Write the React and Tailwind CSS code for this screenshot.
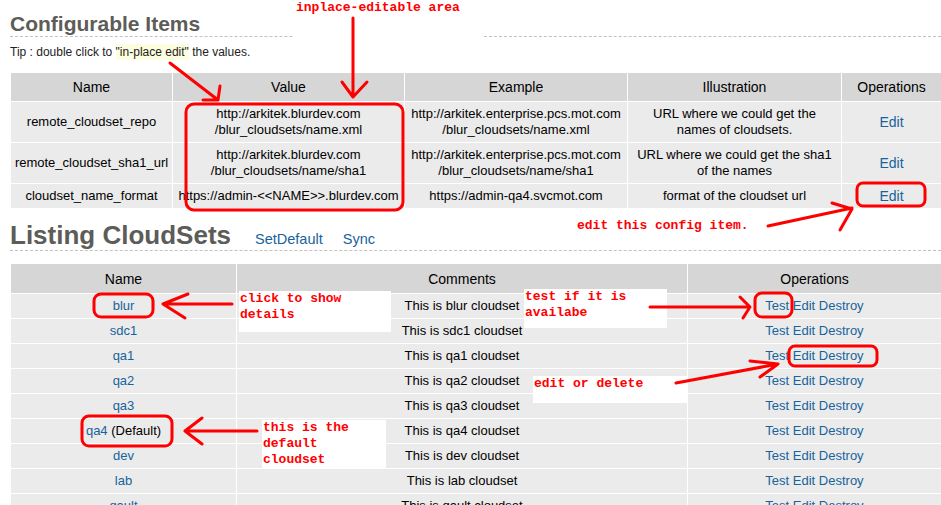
import React from "react";

const configRows = [
  {
    name: "remote_cloudset_repo",
    value: ["http://arkitek.blurdev.com", "/blur_cloudsets/name.xml"],
    example: ["http://arkitek.enterprise.pcs.mot.com", "/blur_cloudsets/name.xml"],
    illustration: ["URL where we could get the", "names of cloudsets."],
  },
  {
    name: "remote_cloudset_sha1_url",
    value: ["http://arkitek.blurdev.com", "/blur_cloudsets/name/sha1"],
    example: ["http://arkitek.enterprise.pcs.mot.com", "/blur_cloudsets/name/sha1"],
    illustration: ["URL where we could get the sha1", "of the names"],
  },
  {
    name: "cloudset_name_format",
    value: ["https://admin-<<NAME>>.blurdev.com"],
    example: ["https://admin-qa4.svcmot.com"],
    illustration: ["format of the cloudset url"],
  },
];

const cloudsets = ["blur", "sdc1", "qa1", "qa2", "qa3", "qa4", "dev", "lab", "qault"];

const Lines = ({ lines }) =>
  lines.map((l, i) => (
    <React.Fragment key={i}>
      {i > 0 && <br />}
      {l}
    </React.Fragment>
  ));

// red scribbles drawn on top of the screenshot
const Annotations = () => (
  <>
    <div className="absolute left-[293px] top-0 w-[191px] h-[40px] bg-white pl-[3px] note">inplace-editable area</div>
    <div className="absolute left-[577px] top-[218px] note">edit this config item.</div>
    <div className="absolute left-[239px] top-[291px] w-[152px] h-[41px] bg-white pl-px note">
      click to show
      <br />
      details
    </div>
    <div className="absolute left-[524px] top-[289px] w-[143px] h-[39px] bg-white pl-px note">
      test if it is
      <br />
      availabe
    </div>
    <div className="absolute left-[533px] top-[376px] w-[155px] h-[27px] bg-white pl-px note">edit or delete</div>
    <div className="absolute left-[262px] top-[420px] w-[124px] h-[48px] bg-white pl-px note">
      this is the
      <br />
      default
      <br />
      cloudset
    </div>

    <svg className="absolute left-0 top-0 pointer-events-none" width="941" height="505" fill="none" stroke="#ff0000" strokeWidth="3" strokeLinecap="round" strokeLinejoin="round">
      <path d="M353 18 L353 96 M342 82 L353 97 L367 82" />
      <path d="M170 63 L218 100 M220 86 L218 100 L203 100" />
      <path d="M768 226 L852 208 M832 203 L852 209 L840 230" />
      <path d="M232 304 L163 304 M188 294 L163 304 L185 318" />
      <path d="M650 307 L750 307 M740 297 L750 307 L743 318" />
      <path d="M676 383 L778 364 M750 361 L778 364 M760 377 L778 364" />
      <path d="M257 431 L185 431 M202 418 L185 431 L202 444" />
      <rect x="186" y="104" width="217" height="106" rx="8" />
      <rect x="857" y="183" width="68" height="23" rx="6" />
      <rect x="94" y="294" width="59" height="23" rx="7" />
      <rect x="755" y="293" width="37" height="24" rx="7" />
      <rect x="789" y="346" width="88" height="20" rx="6" />
      <rect x="82" y="416" width="90" height="30" rx="7" />
    </svg>
  </>
);

export default function App() {
  return (
    <div className="relative w-[941px] h-[505px] overflow-hidden bg-white font-['Liberation_Sans',Arial,sans-serif] text-black">
      <style>{`.note{font-family:"Liberation Mono","DejaVu Sans Mono",monospace;font-weight:700;font-size:13px;line-height:16px;color:#ff0000;white-space:nowrap}`}</style>

      <div className="pl-[10px]">
        <h1 className="mt-[12px] text-[21px] leading-[24px] font-bold text-[#5c5c58] border-b border-dashed border-[#c2c2c2]">
          Configurable Items
        </h1>
        <p className="mt-[8px] text-[12px] leading-[15px] text-[#222]">
          Tip : double click to <span className="bg-[#fdfde0] py-px">"in-place edit"</span> the values.
        </p>

        <table className="mt-[12px] w-[931px] table-fixed border-collapse text-center text-[13px] leading-[16px]">
          <colgroup>
            <col className="w-[162px]" />
            <col className="w-[232px]" />
            <col className="w-[223px]" />
            <col className="w-[214px]" />
            <col className="w-[100px]" />
          </colgroup>
          <thead>
            <tr className="bg-[#d6d6d6] text-[14px] leading-[17px]">
              {["Name", "Value", "Example", "Illustration", "Operations"].map((h) => (
                <th key={h} className="font-normal pt-[6px] pb-[5px] border border-white">{h}</th>
              ))}
            </tr>
          </thead>
          <tbody>
            {configRows.map((r) => (
              <tr key={r.name} className="bg-[#ebebeb]">
                <td className="py-1 border border-white">{r.name}</td>
                <td className="py-1 border border-white whitespace-nowrap"><Lines lines={r.value} /></td>
                <td className="py-1 border border-white whitespace-nowrap"><Lines lines={r.example} /></td>
                <td className="py-1 border border-white"><Lines lines={r.illustration} /></td>
                <td className="py-1 border border-white text-[#17639b] text-[14px]">Edit</td>
              </tr>
            ))}
          </tbody>
        </table>

        <div className="mt-[11px] flex items-baseline border-b border-dashed border-[#c2c2c2] h-[31px]">
          <h2 className="text-[26px] leading-[30px] font-bold text-[#5c5c58]">Listing CloudSets</h2>
          <a className="ml-[24px] text-[14.5px] text-[#17639b]">SetDefault</a>
          <a className="ml-[20px] text-[14.5px] text-[#17639b]">Sync</a>
        </div>

        <table className="mt-[12px] w-[931px] table-fixed border-collapse text-center text-[13px] leading-[16px]">
          <colgroup>
            <col className="w-[226px]" />
            <col className="w-[451px]" />
            <col className="w-[254px]" />
          </colgroup>
          <thead>
            <tr className="bg-[#d6d6d6] text-[14px] leading-[17px]">
              {["Name", "Comments", "Operations"].map((h) => (
                <th key={h} className="font-normal pt-[7px] pb-[5px] border border-white">{h}</th>
              ))}
            </tr>
          </thead>
          <tbody>
            {cloudsets.map((c) => (
              <tr key={c} className="bg-[#ebebeb]">
                <td className="py-1 border border-white">
                  <a className="text-[#17639b]">{c}</a>
                  {c === "qa4" && " (Default)"}
                </td>
                <td className="py-1 border border-white">This is {c} cloudset</td>
                <td className="py-1 border border-white text-[#17639b]">Test Edit Destroy</td>
              </tr>
            ))}
          </tbody>
        </table>
      </div>

      <Annotations />
    </div>
  );
}
